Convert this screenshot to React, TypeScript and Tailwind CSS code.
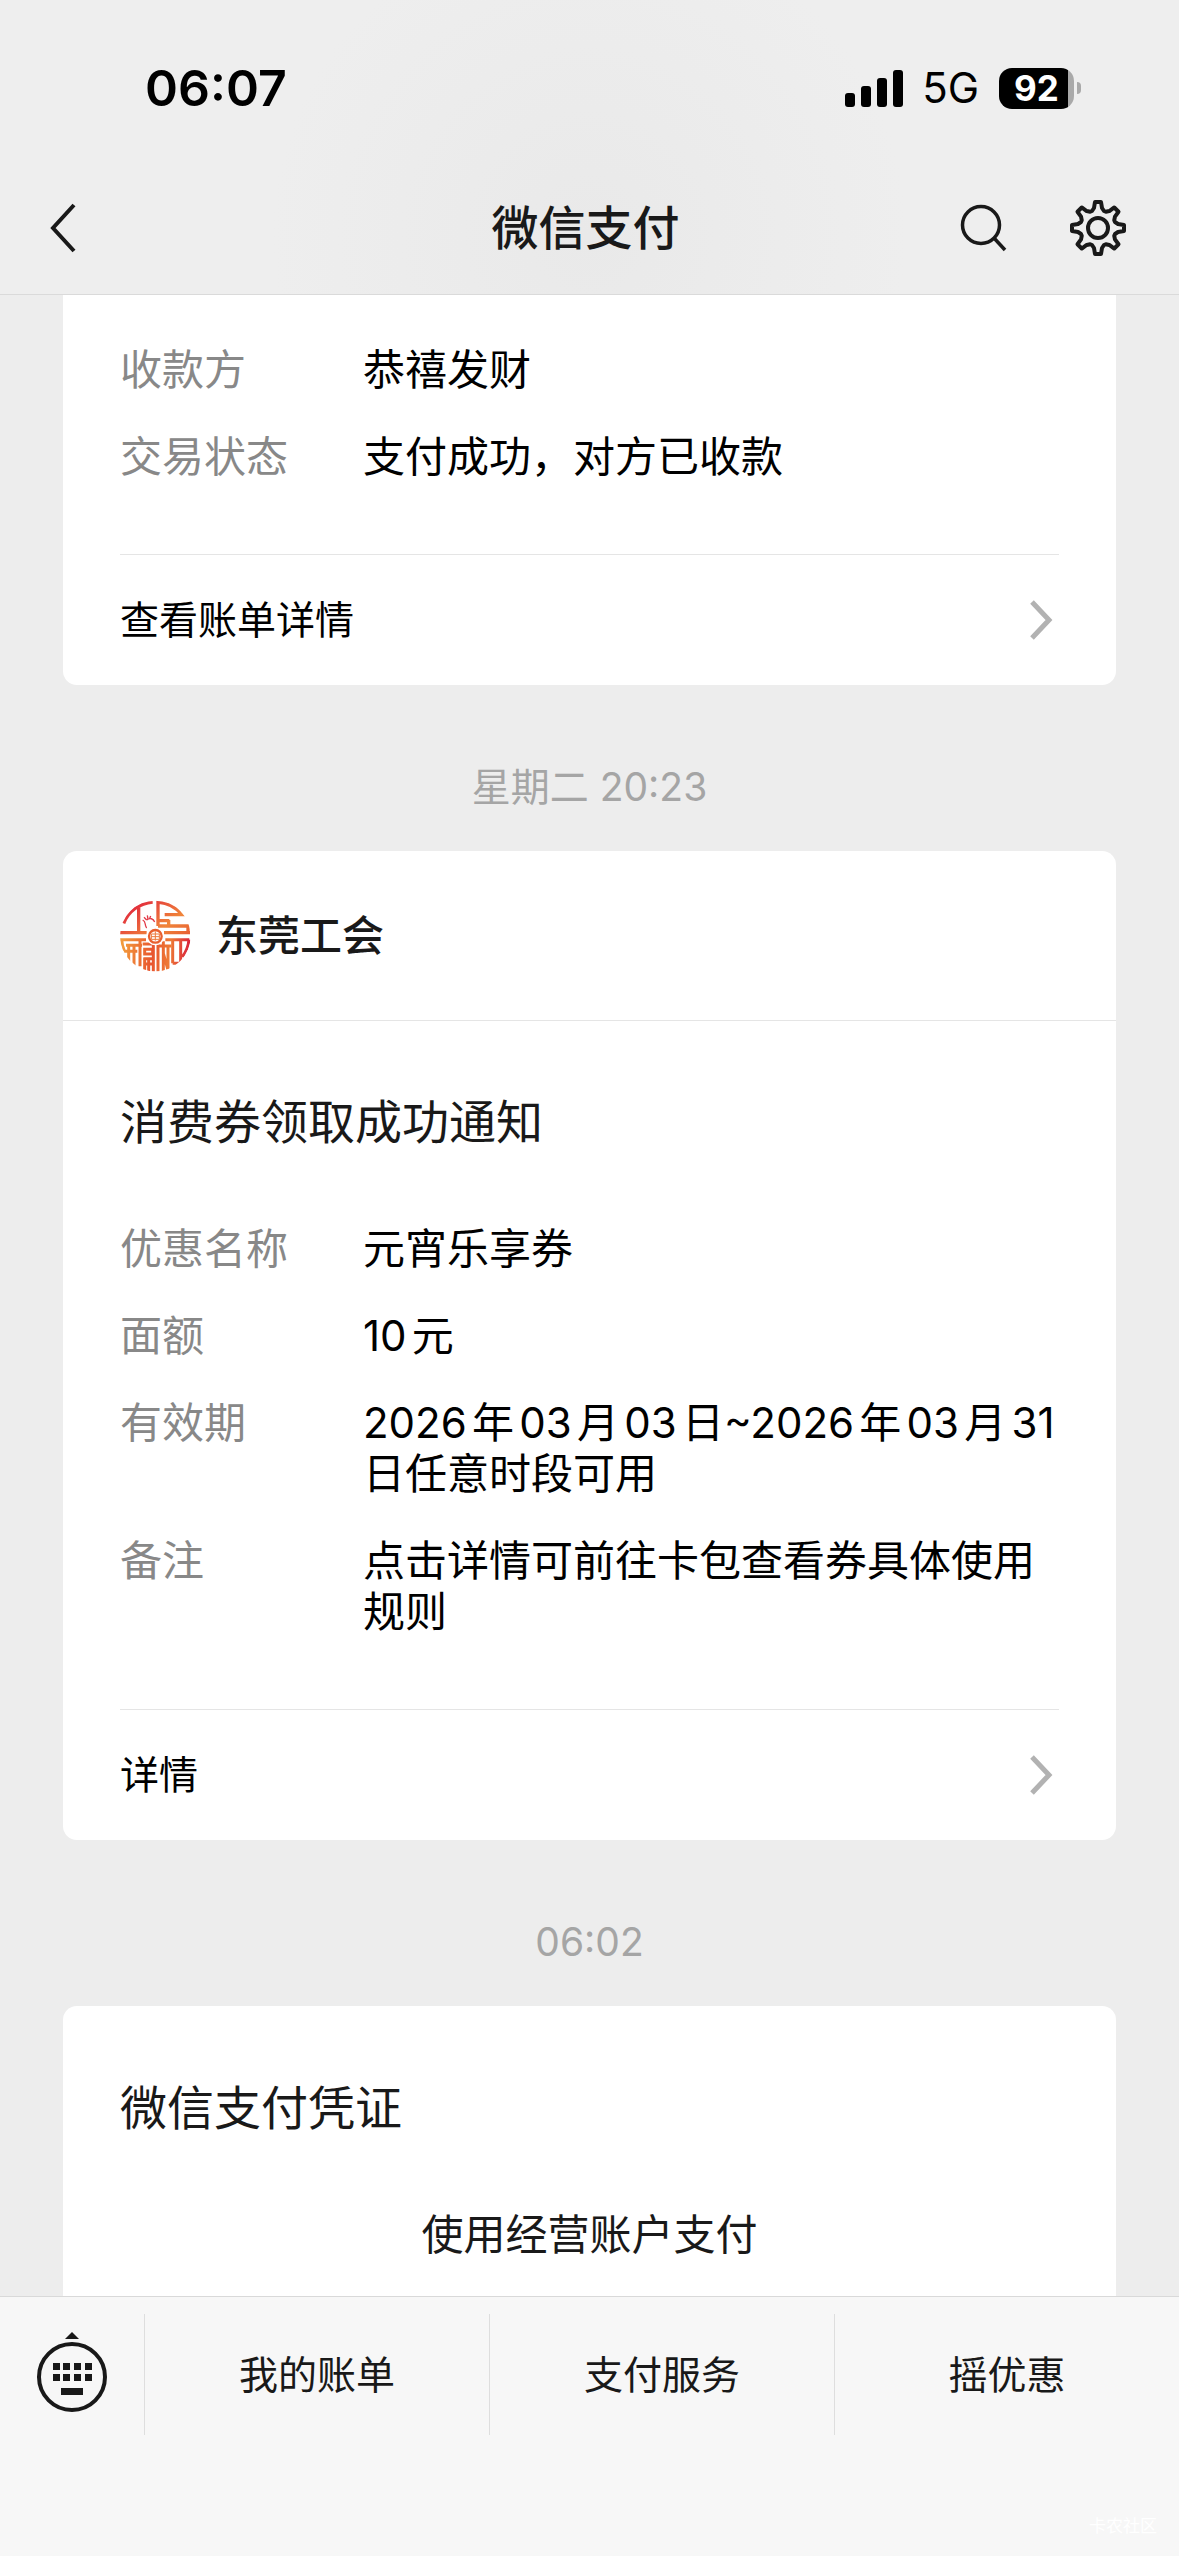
import type { ReactNode } from "react";

type Field = {
  label: string;
  value: string;
};

const paymentFields: Field[] = [
  { label: "收款方", value: "恭禧发财" },
  { label: "交易状态", value: "支付成功，对方已收款" },
];

const couponFields: Field[] = [
  { label: "优惠名称", value: "元宵乐享券" },
  { label: "面额", value: "10元" },
  { label: "有效期", value: "2026年03月03日~2026年03月31日任意时段可用" },
  { label: "备注", value: "点击详情可前往卡包查看券具体使用规则" },
];

const menuItems = ["我的账单", "支付服务", "摇优惠"];

// One tooth of the gear, pointing up from the centre, repeated every 45 degrees
const tooth = [
  [-6, -17],
  [-4, -20],
  [-3, -26],
  [3, -26],
  [4, -20],
  [6, -17],
];

const gearPoints = Array.from({ length: 8 }, (_, i) => {
  const a = (i * Math.PI) / 4;
  return tooth
    .map(([x, y]) => {
      const px = x * Math.cos(a) - y * Math.sin(a);
      const py = x * Math.sin(a) + y * Math.cos(a);
      return `${px.toFixed(2)},${py.toFixed(2)}`;
    })
    .join(" ");
}).join(" ");

function StatusBar() {
  return (
    <div className="flex h-44 items-center justify-between pr-[98px] pl-[145px] text-black">
      <span className="text-[50px] leading-[60px] font-semibold">06:07</span>
      <div className="flex items-center">
        <svg width="58" height="38" viewBox="0 0 58 38" aria-hidden="true">
          <rect x="0" y="24" width="10" height="14" rx="3" />
          <rect x="16" y="17" width="10" height="21" rx="3" />
          <rect x="32" y="9" width="10" height="29" rx="3" />
          <rect x="48" y="1" width="10" height="37" rx="3" />
        </svg>
        <span className="ml-[19px] text-[42px] leading-[50px]">5G</span>
        <div className="ml-5 flex items-center gap-[3px]">
          <div className="flex h-[41px] w-[75px] items-center justify-center rounded-[13px] bg-linear-to-r from-black from-92% to-[#a9a9a9] to-92% text-[35px] leading-none font-bold text-white">
            92
          </div>
          <div className="h-3 w-1 rounded-r-full bg-[#a9a9a9]" />
        </div>
      </div>
    </div>
  );
}

function NavBar() {
  return (
    <div className="grid h-[118px] grid-cols-[1fr_auto_1fr] items-center pr-[51px] pb-[15px] pl-[43px] text-[#191919]">
      <button type="button" aria-label="返回" className="justify-self-start">
        <svg width="40" height="56" viewBox="0 0 40 56" fill="none" stroke="currentColor" strokeWidth="4">
          <path d="M31 5 10 28l21 23" />
        </svg>
      </button>
      <h1 className="text-[47px] leading-[60px] font-medium">微信支付</h1>
      <div className="flex items-center gap-[58px] justify-self-end">
        <button type="button" aria-label="搜索">
          <svg width="56" height="56" viewBox="0 0 56 56" fill="none" stroke="currentColor" strokeWidth="3.5">
            <circle cx="27" cy="25" r="18.5" />
            <path d="m40 38 11 12" />
          </svg>
        </button>
        <button type="button" aria-label="设置">
          <svg
            width="60"
            height="60"
            viewBox="-30 -30 60 60"
            fill="none"
            stroke="currentColor"
            strokeWidth="4"
            strokeLinejoin="round"
          >
            <polygon points={gearPoints} />
            <circle r="10" />
          </svg>
        </button>
      </div>
    </div>
  );
}

function Timestamp({ children }: { children: ReactNode }) {
  return (
    <time className="block pt-[76px] pb-[38px] text-center text-[39px] leading-[52px] text-[#a5a5a5]">
      {children}
    </time>
  );
}

function FieldList({ fields }: { fields: Field[] }) {
  return (
    <dl className="flex flex-col gap-9 pb-[72px] text-[42px] leading-[51px]">
      {fields.map((field) => (
        <div key={field.label} className="flex">
          <dt className="w-[243px] shrink-0 text-[#888888]">{field.label}</dt>
          <dd className="flex-1 text-black [text-autospace:normal]">{field.value}</dd>
        </div>
      ))}
    </dl>
  );
}

function DetailLink({ children }: { children: ReactNode }) {
  return (
    <a
      href="#detail"
      className="flex h-[131px] items-center justify-between border-t border-[#e5e5e5] pr-[5px] text-[39px] leading-[52px] text-black"
    >
      {children}
      <svg width="26" height="44" viewBox="0 0 26 44" fill="none" stroke="#b2b2b2" strokeWidth="5" aria-hidden="true">
        <path d="m4 4 17 18L4 40" />
      </svg>
    </a>
  );
}

function UnionLogo() {
  return (
    <svg width="72" height="72" viewBox="0 0 216 216" fill="none" aria-hidden="true">
      <defs>
        <linearGradient id="seal" gradientUnits="userSpaceOnUse" x1="40" y1="0" x2="190" y2="216">
          <stop offset="0" stopColor="#e01f3d" />
          <stop offset="0.45" stopColor="#f0853a" />
          <stop offset="0.62" stopColor="#ea6a35" />
          <stop offset="1" stopColor="#dc2038" />
        </linearGradient>
        <linearGradient id="sealLow" gradientUnits="userSpaceOnUse" x1="10" y1="130" x2="210" y2="150">
          <stop offset="0" stopColor="#f29a3c" />
          <stop offset="0.45" stopColor="#e8552f" />
          <stop offset="0.7" stopColor="#ee7a35" />
          <stop offset="1" stopColor="#d91f3c" />
        </linearGradient>
        <clipPath id="disc">
          <circle cx="106" cy="108" r="106" />
        </clipPath>
      </defs>
      <g clipPath="url(#disc)">
        <g stroke="url(#seal)" strokeWidth="10">
          <path d="M11 70A102 102 0 0 1 98 6" />
          <path d="M56 22v72M0 98h80" />
          <path d="M114 78V6A102 102 0 0 1 186 44H134" />
          <path d="M114 62h34M146 60v18M114 78h94M132 98h78M204 78v18" />
        </g>
        <g stroke="url(#sealLow)" strokeWidth="9">
          <path d="M0 119h78M5 119a102 102 0 0 0 8 34" />
          <path d="M18 136h48M26 136v56M42 136v66M60 119v80M12 154h40" />
          <path d="M68 132h32M74 148h24v14H74zM70 176h30M70 192h30M74 174v36M86 174v40M100 132v84" />
          <path d="M114 132v84M114 138h40M130 124v90M130 160l14 50M144 138v74" />
          <path d="M136 119h72M158 124v66M158 190h22M182 124v66M207 119a102 102 0 0 1-20 52" />
        </g>
        <circle cx="106" cy="109" r="27" fill="#fff" />
        <circle cx="106" cy="109" r="19" stroke="#e8602f" strokeWidth="7" />
        <path d="M94 102h24v16H94zM106 94v28M94 110h24" stroke="#ec7a3c" strokeWidth="3" />
        <path
          d="M80 84C72 74 80 66 68 60M72 52l8 8M82 46l2 12M92 48l-4 10M104 66c-4-10-14-14-24-6"
          stroke="#e23a48"
          strokeWidth="4"
        />
      </g>
    </svg>
  );
}

function KeyboardIcon() {
  return (
    <svg width="72" height="84" viewBox="0 0 72 84" fill="none" aria-hidden="true">
      <path d="M36 1 43 8H29z" fill="#191919" />
      <circle cx="36" cy="46" r="33" stroke="#191919" strokeWidth="4" />
      <g fill="#191919">
        {[17, 27, 38, 49].map((x) => (
          <g key={x}>
            <rect x={x} y="32" width="7" height="7" />
            <rect x={x} y="43" width="7" height="7" />
          </g>
        ))}
        <rect x="25" y="57" width="22" height="7" />
      </g>
    </svg>
  );
}

export default function App() {
  return (
    <div
      lang="zh-CN"
      className="flex min-h-screen flex-col bg-[#ededed] font-['Inter','Noto_Sans_CJK_SC',sans-serif]"
    >
      <header className="border-b border-[#dadada] bg-[radial-gradient(circle_at_50%_80%,#e9e9e9,#eeeeee_50%)]">
        <StatusBar />
        <NavBar />
      </header>

      <main className="flex flex-1 flex-col px-[63px]">
        {/* Payment receipt */}
        <section className="rounded-b-[14px] bg-white px-[57px] pt-[49px]">
          <FieldList fields={paymentFields} />
          <DetailLink>查看账单详情</DetailLink>
        </section>

        <Timestamp>星期二 20:23</Timestamp>

        {/* Coupon notice */}
        <section className="rounded-[14px] bg-white">
          <div className="flex h-[170px] items-center gap-6 border-b border-[#e5e5e5] px-[57px]">
            <UnionLogo />
            <span className="text-[42px] leading-[51px] font-medium text-[#191919]">东莞工会</span>
          </div>
          <div className="px-[57px] pt-[71px]">
            <h2 className="mb-[71px] text-[47px] leading-[60px] text-[#191919]">消费券领取成功通知</h2>
            <FieldList fields={couponFields} />
            <DetailLink>详情</DetailLink>
          </div>
        </section>

        <Timestamp>06:02</Timestamp>

        {/* Payment voucher */}
        <section className="flex-1 rounded-t-[14px] bg-white px-[57px] pt-[72px] pb-8">
          <h2 className="mb-[71px] text-[47px] leading-[60px] text-[#191919]">微信支付凭证</h2>
          <p className="text-center text-[42px] leading-[51px] text-[#191919]">使用经营账户支付</p>
        </section>
      </main>

      <footer className="border-t border-[#d9d9d9] bg-[#f7f7f7] pt-[17px]">
        <nav className="flex h-[121px] divide-x divide-[#dedede]">
          <button type="button" aria-label="键盘" className="flex w-[145px] items-center justify-center pb-1">
            <KeyboardIcon />
          </button>
          {menuItems.map((item) => (
            <button key={item} type="button" className="flex-1 text-[39px] leading-[52px] text-[#191919]">
              {item}
            </button>
          ))}
        </nav>
        <p className="flex h-[121px] items-end justify-end pr-[22px] pb-[18px] text-[17px] leading-6 text-white">
          卡农社区
        </p>
      </footer>
    </div>
  );
}
